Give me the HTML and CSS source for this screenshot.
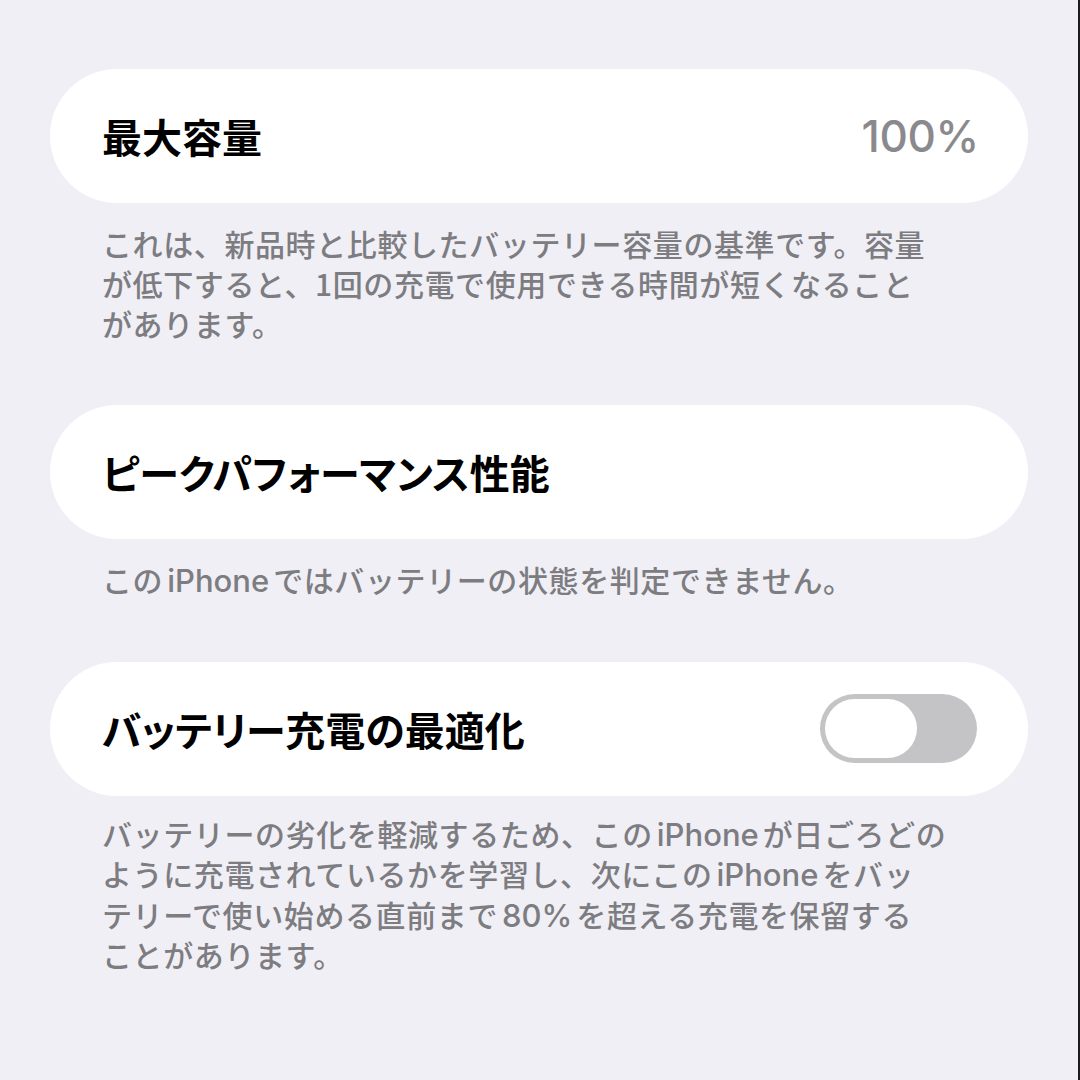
FILE: index.html
```html
<!DOCTYPE html>
<html lang="ja">
<head>
<meta charset="utf-8">
<link rel="stylesheet" href="styles.css">
</head>
<body>
<div class="page">
  <section class="group">
    <div class="card">
      <span class="title">最大容量</span>
      <span class="value">100%</span>
    </div>
    <p class="note">これは、新品時と比較したバッテリー容量の基準です。容量<br>が低下すると、1回の充電で使用できる時間が短くなること<br>があります。</p>
  </section>
  <section class="group">
    <div class="card">
      <span class="title">ピークパフォーマンス性能</span>
    </div>
    <p class="note">この<span class="lat">iPhone</span>ではバッテリーの状態を判定できません。</p>
  </section>
  <section class="group last">
    <div class="card">
      <span class="title">バッテリー充電の最適化</span>
      <span class="toggle"><span class="knob"></span></span>
    </div>
    <p class="note">バッテリーの劣化を軽減するため、この<span class="lat">iPhone</span>が日ごろどの<br>ように充電されているかを学習し、次にこの<span class="lat">iPhone</span>をバッ<br>テリーで使い始める直前まで<span class="lat">80%</span>を超える充電を保留する<br>ことがあります。</p>
  </section>
</div>
</body>
</html>
```

FILE: styles.css
```css
html, body {
  margin: 0;
  padding: 0;
}
body {
  background: #f0eff5;
  font-family: Inter, "Noto Sans CJK JP", sans-serif;
}
.page {
  width: 1080px;
  height: 1080px;
  box-sizing: border-box;
  padding: 69px 50px 0 50px;
  border-right: 2px solid #1c1c1e;
  display: flex;
  flex-direction: column;
  gap: 62px;
}
.group {
  display: flex;
  flex-direction: column;
  gap: 20px;
}
.group.last {
  gap: 17px;
}
.card {
  background: #ffffff;
  height: 134px;
  border-radius: 67px;
  display: flex;
  align-items: center;
  justify-content: space-between;
  padding: 0 51px 0 52px;
  box-sizing: border-box;
}
.title {
  font-family: "Noto Sans CJK JP", sans-serif;
  font-size: 40px;
  font-weight: 700;
  color: #000000;
  font-feature-settings: "palt";
}
.value {
  font-family: Inter, sans-serif;
  font-size: 44px;
  font-weight: 500;
  color: #8a8a8e;
  letter-spacing: -0.3px;
  margin-right: -2px;
}
.toggle {
  width: 157px;
  height: 69px;
  border-radius: 35px;
  background: #c4c4c7;
  box-sizing: border-box;
  padding: 5px;
  display: flex;
  align-items: center;
}
.knob {
  width: 92px;
  height: 59px;
  border-radius: 30px;
  background: #ffffff;
}
.note {
  margin: 0;
  padding-left: 52px;
  font-family: "Noto Sans CJK JP", sans-serif;
  font-size: 30px;
  font-weight: 500;
  line-height: 40.5px;
  letter-spacing: 0.6px;
  color: #7c7c81;
}
.group:first-child .note {
  line-height: 40px;
}
.lat {
  font-family: Inter, sans-serif;
  font-size: 31px;
  font-weight: 500;
  line-height: 1;
  letter-spacing: 0;
  margin: 0 4px;
}
```
